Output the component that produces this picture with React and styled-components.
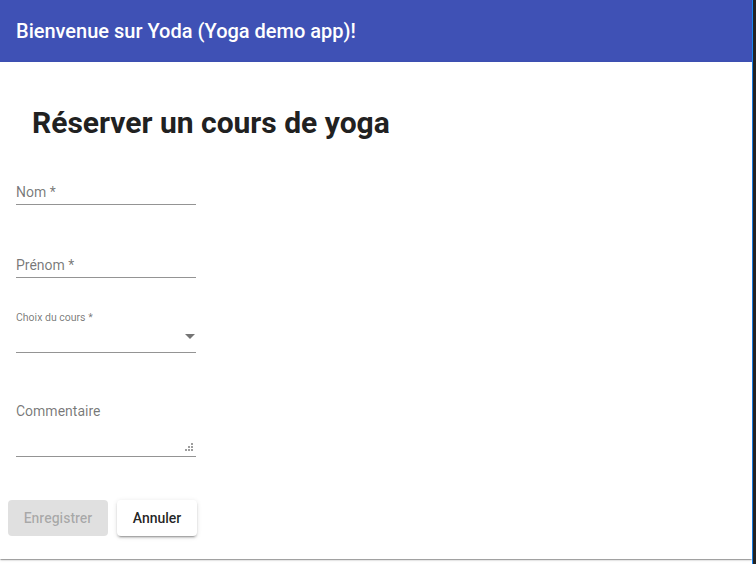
import React from "react";
import styled, { createGlobalStyle } from "styled-components";

const Global = createGlobalStyle`
  html, body { margin: 0; padding: 0; background: #232323; }
  body { font-family: Roboto, "Helvetica Neue", Arial, sans-serif; }
  * { box-sizing: border-box; }
`;

const Page = styled.div`
  width: 753px;
  min-height: 564px;
  background: #ffffff;
  border-right: 1px solid #1a84f0;
  display: flex;
  flex-direction: column;
`;

const Toolbar = styled.header`
  height: 62px;
  background: #3f51b5;
  color: #ffffff;
  display: flex;
  align-items: center;
  padding: 0 16px;
  font-size: 20px;
  font-weight: 500;
  letter-spacing: 0;
`;

const Card = styled.main`
  background: #ffffff;
  box-shadow: 0 2px 1px -1px rgba(0,0,0,.2), 0 1px 1px 0 rgba(0,0,0,.14), 0 1px 3px 0 rgba(0,0,0,.12);
  padding: 41px 0 23px;
  display: flex;
  flex-direction: column;
`;

const Title = styled.h1`
  margin: 0 0 0 32px;
  font-size: 30px;
  line-height: 40px;
  font-weight: 700;
  color: #212121;
`;

const Form = styled.form`
  display: flex;
  flex-direction: column;
  padding-left: 16px;
`;

const Field = styled.div`
  width: 180px;
  margin-top: ${(p) => p.$gap}px;
  border-bottom: 1px solid rgba(0,0,0,.42);
  display: flex;
  flex-direction: column;
`;

const Label = styled.label`
  font-size: ${(p) => (p.$small ? "10.5px" : "14px")};
  line-height: ${(p) => (p.$small ? "12px" : "16px")};
  color: rgba(0,0,0,.54);
  padding-bottom: ${(p) => p.$pb || 0}px;
`;

const SelectRow = styled.div`
  height: 28px;
  display: flex;
  align-items: center;
  justify-content: flex-end;
  padding: 0 1px 4px 0;
`;

const TextAreaBox = styled.div`
  height: 37px;
  display: flex;
  align-items: flex-end;
  justify-content: flex-end;
  padding: 0 3px 5px 0;
`;

const Actions = styled.div`
  display: flex;
  gap: 9px;
  padding-left: 8px;
  margin-top: 43px;
`;

const Button = styled.button`
  height: 36px;
  width: ${(p) => p.$w}px;
  border: none;
  border-radius: 4px;
  font-family: Roboto, Arial, sans-serif;
  font-size: 14px;
  font-weight: 500;
  padding: 0;
  background: ${(p) => (p.disabled ? "rgba(0,0,0,.12)" : "#ffffff")};
  color: ${(p) => (p.disabled ? "rgba(0,0,0,.26)" : "rgba(0,0,0,.87)")};
  box-shadow: ${(p) =>
    p.disabled
      ? "none"
      : "0 3px 1px -2px rgba(0,0,0,.2), 0 2px 2px 0 rgba(0,0,0,.14), 0 1px 5px 0 rgba(0,0,0,.12)"};
`;

const Arrow = () => (
  <svg width="10" height="5" viewBox="0 0 10 5">
    <path d="M0 0 L10 0 L5 5 Z" fill="rgba(0,0,0,.54)" />
  </svg>
);

const Resize = () => (
  <svg width="8" height="8" viewBox="0 0 8 8">
    {[
      [6, 0],
      [3, 3], [6, 3],
      [0, 6], [3, 6], [6, 6],
    ].map(([x, y], i) => (
      <rect key={i} x={x} y={y} width="2" height="2" fill="#9e9e9e" />
    ))}
  </svg>
);

export default function App() {
  return (
    <>
      <Global />
      <Page>
        <Toolbar>Bienvenue sur Yoda (Yoga demo app)!</Toolbar>
        <Card>
          <Title>Réserver un cours de yoga</Title>
          <Form>
            <Field $gap={41}>
              <Label $pb={4}>Nom *</Label>
            </Field>
            <Field $gap={52}>
              <Label $pb={4}>Prénom *</Label>
            </Field>
            <Field $gap={34}>
              <Label $small>Choix du cours *</Label>
              <SelectRow>
                <Arrow />
              </SelectRow>
            </Field>
            <Field $gap={50}>
              <Label>Commentaire</Label>
              <TextAreaBox>
                <Resize />
              </TextAreaBox>
            </Field>
          </Form>
          <Actions>
            <Button disabled $w={100}>Enregistrer</Button>
            <Button type="button" $w={80}>Annuler</Button>
          </Actions>
        </Card>
      </Page>
    </>
  );
}
